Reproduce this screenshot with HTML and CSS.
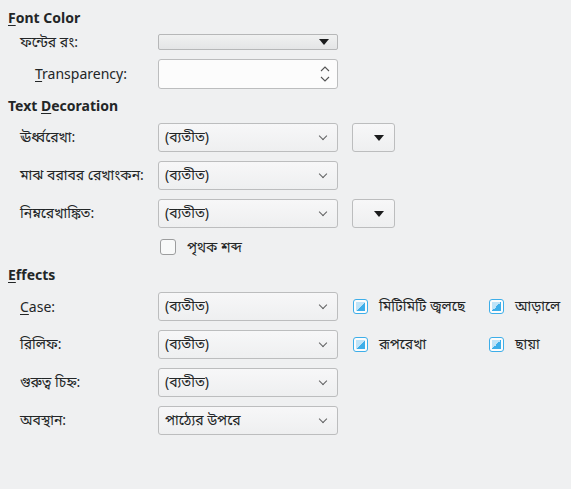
FILE: index.html
```html
<!DOCTYPE html>
<html lang="bn">
<head>
  <meta charset="UTF-8">
  <title>Font Effects</title>
  <link rel="stylesheet" href="styles.css">
</head>
<body>
  <div class="page">
    <!-- Font color -->
    <h2 class="heading"><u>F</u>ont Color</h2>
    <div class="row row-small">
      <span class="label">ফন্টের রং:</span>
      <div class="color-btn"><span class="tri"></span></div>
    </div>
    <div class="row row-spin">
      <span class="label indent"><u>T</u>ransparency:</span>
      <div class="spin">
        <svg width="10" height="18" viewBox="0 0 10 18">
          <path d="M1 6 L5 2 L9 6" fill="none" stroke="#555" stroke-width="1.1"/>
          <path d="M1 12 L5 16 L9 12" fill="none" stroke="#555" stroke-width="1.1"/>
        </svg>
      </div>
    </div>

    <!-- Text decoration -->
    <h2 class="heading mid">Text <u>D</u>ecoration</h2>
    <div class="row first">
      <span class="label">ঊর্ধ্বরেখা:</span>
      <div class="select"><span>(ব্যতীত)</span><span class="chev"></span></div>
      <div class="small-btn"><span class="tri"></span></div>
    </div>
    <div class="row">
      <span class="label">মাঝ বরাবর রেখাংকন:</span>
      <div class="select"><span>(ব্যতীত)</span><span class="chev"></span></div>
    </div>
    <div class="row">
      <span class="label">নিম্নরেখাঙ্কিত:</span>
      <div class="select"><span>(ব্যতীত)</span><span class="chev"></span></div>
      <div class="small-btn"><span class="tri"></span></div>
    </div>
    <div class="row row-check">
      <span class="label"></span>
      <span class="box"></span>
      <span class="check-text">পৃথক শব্দ</span>
    </div>

    <!-- Effects -->
    <h2 class="heading low"><u>E</u>ffects</h2>
    <div class="row first">
      <span class="label"><u>C</u>ase:</span>
      <div class="select"><span>(ব্যতীত)</span><span class="chev"></span></div>
      <div class="check wide"><span class="tristate"></span><span>মিটিমিটি জ্বলছে</span></div>
      <div class="check"><span class="tristate"></span><span>আড়ালে</span></div>
    </div>
    <div class="row">
      <span class="label">রিলিফ:</span>
      <div class="select"><span>(ব্যতীত)</span><span class="chev"></span></div>
      <div class="check wide"><span class="tristate"></span><span>রূপরেখা</span></div>
      <div class="check"><span class="tristate"></span><span>ছায়া</span></div>
    </div>
    <div class="row">
      <span class="label">গুরুত্ব চিহ্ন:</span>
      <div class="select"><span>(ব্যতীত)</span><span class="chev"></span></div>
    </div>
    <div class="row">
      <span class="label">অবস্থান:</span>
      <div class="select"><span>পাঠ্যের উপরে</span><span class="chev"></span></div>
    </div>
  </div>
</body>
</html>
```

FILE: styles.css
```css
body {
  margin: 0;
  background-color: #eff0f1;
  font-family: "Noto Sans", "Noto Sans Bengali", sans-serif;
  font-size: 14px;
  color: #232627;
}

.page {
  padding: 9px 8px 0 8px;
}

.heading {
  margin: 0;
  font-size: 14px;
  font-weight: bold;
  line-height: 18px;
}

.heading.mid {
  margin-top: 9px;
}

.heading.low {
  margin-top: 11px;
}

u {
  text-underline-offset: 2px;
}

.row {
  display: flex;
  align-items: center;
  height: 29px;
  margin-top: 9px;
}

.row.first {
  margin-top: 8px;
}

.row-small {
  height: 16px;
  margin-top: 7px;
}

.label {
  width: 138px;
  padding-left: 12px;
  flex-shrink: 0;
  white-space: nowrap;
}

.label.indent {
  width: 123px;
  padding-left: 27px;
}

/* colour picker button */
.color-btn {
  width: 178px;
  height: 14px;
  border: 1px solid #b6b7b8;
  border-radius: 2px;
  background: linear-gradient(#f0f1f1, #e4e5e6);
  display: flex;
  align-items: center;
  justify-content: flex-end;
}

.tri {
  width: 0;
  height: 0;
  border-left: 5px solid transparent;
  border-right: 5px solid transparent;
  border-top: 6px solid #1b1c1d;
  margin-right: 8px;
}

.spin {
  width: 178px;
  height: 28px;
  border: 1px solid #bcbdbe;
  border-radius: 3px;
  background-color: #fcfcfc;
  display: flex;
  align-items: center;
  justify-content: flex-end;
}

.spin svg {
  margin-right: 7px;
}

.select {
  width: 172px;
  height: 27px;
  padding: 0 0 0 6px;
  border: 1px solid #bcbdbe;
  border-radius: 3px;
  background: linear-gradient(#f7f7f8, #eeeff0);
  display: flex;
  align-items: center;
  justify-content: space-between;
  flex-shrink: 0;
}

.chev {
  width: 5px;
  height: 5px;
  border-right: 1px solid #606162;
  border-bottom: 1px solid #606162;
  transform: rotate(45deg);
  margin: 0 11px 4px 0;
}

.small-btn {
  width: 41px;
  height: 27px;
  margin-left: 14px;
  border: 1px solid #bcbdbe;
  border-radius: 3px;
  background: linear-gradient(#f7f7f8, #eeeff0);
  display: flex;
  align-items: center;
  justify-content: flex-end;
}

.small-btn .tri {
  margin-right: 10px;
}

.row-check {
  height: 16px;
  margin-top: 11px;
}

.box {
  width: 14px;
  height: 14px;
  margin-left: 2px;
  border: 1px solid #9c9d9e;
  border-radius: 3px;
  background-color: #f8f9f9;
}

.check-text {
  margin-left: 11px;
}

.check {
  display: flex;
  align-items: center;
  gap: 11px;
}

.check.wide {
  width: 136px;
  margin-left: 15px;
}

.tristate {
  position: relative;
  width: 13px;
  height: 13px;
  border: 1px solid #3daee9;
  border-radius: 3px;
  background-color: #fcfcfc;
}

.tristate::after {
  content: "";
  position: absolute;
  left: 2px;
  top: 2px;
  width: 9px;
  height: 9px;
  background: linear-gradient(to bottom right, #bfe3f7 50%, #3daee9 50%);
}
```
